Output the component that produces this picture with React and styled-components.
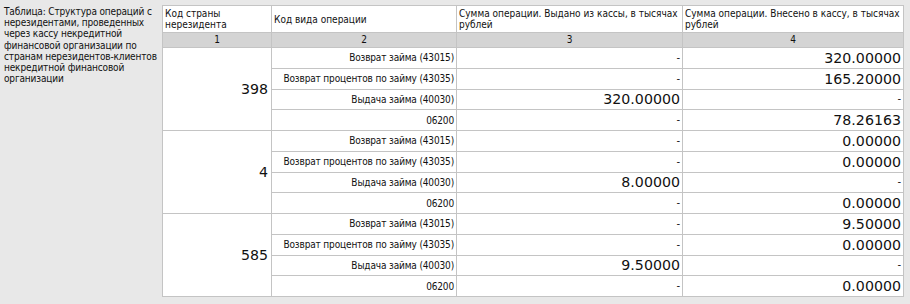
import { createGlobalStyle, styled } from "styled-components";

const GlobalStyle = createGlobalStyle`
  html, body {
    margin: 0;
    background: #e8e8e8;
  }
`;

const captionLines = [
  "Таблица: Структура операций с",
  "нерезидентами, проведенных",
  "через кассу некредитной",
  "финансовой организации по",
  "странам нерезидентов-клиентов",
  "некредитной финансовой",
  "организации",
];

const groups = [
  {
    country: "398",
    rows: [
      ["Возврат займа (43015)", "-", "320.00000"],
      ["Возврат процентов по займу (43035)", "-", "165.20000"],
      ["Выдача займа (40030)", "320.00000", "-"],
      ["06200", "-", "78.26163"],
    ],
  },
  {
    country: "4",
    rows: [
      ["Возврат займа (43015)", "-", "0.00000"],
      ["Возврат процентов по займу (43035)", "-", "0.00000"],
      ["Выдача займа (40030)", "8.00000", "-"],
      ["06200", "-", "0.00000"],
    ],
  },
  {
    country: "585",
    rows: [
      ["Возврат займа (43015)", "-", "9.50000"],
      ["Возврат процентов по займу (43035)", "-", "0.00000"],
      ["Выдача займа (40030)", "9.50000", "-"],
      ["06200", "-", "0.00000"],
    ],
  },
];

export default function App() {
  return (
    <Page>
      <GlobalStyle />
      <Caption>
        {captionLines.map((l) => (
          <CaptionLine key={l}>{l}</CaptionLine>
        ))}
      </Caption>
      <Grid>
        <colgroup>
          <col style={{ width: 109 }} />
          <col style={{ width: 185 }} />
          <col style={{ width: 226 }} />
          <col />
        </colgroup>
        <thead>
          <tr>
            <Head>Код страны нерезидента</Head>
            <Head>Код вида операции</Head>
            <Head>Сумма операции. Выдано из кассы, в тысячах рублей</Head>
            <Head>Сумма операции. Внесено в кассу, в тысячах рублей</Head>
          </tr>
          <tr>
            <Index>1</Index>
            <Index>2</Index>
            <Index>3</Index>
            <Index>4</Index>
          </tr>
        </thead>
        <tbody>
          {groups.map((g) =>
            g.rows.map((r, i) => (
              <Row key={g.country + i}>
                {i === 0 && <Country rowSpan={4}>{g.country}</Country>}
                <Label>{r[0]}</Label>
                <Amount $dash={r[1] === "-"}>{r[1]}</Amount>
                <Amount $dash={r[2] === "-"}>{r[2]}</Amount>
              </Row>
            ))
          )}
        </tbody>
      </Grid>
    </Page>
  );
}

const Page = styled.div`
  display: flex;
  align-items: flex-start;
  width: 910px;
  height: 304px;
  font-family: "DejaVu Sans Condensed", "DejaVu Sans", sans-serif;
  color: #111;
  overflow: hidden;
`;

const Caption = styled.div`
  width: 154px;
  padding: 6px 0 0 4px;
  font-size: 10px;
  line-height: 11.2px;
  letter-spacing: -0.15px;
  box-sizing: content-box;
`;

const CaptionLine = styled.div`
  white-space: nowrap;
`;

const Grid = styled.table`
  margin: 5px 0 0 4px;
  width: 742px;
  table-layout: fixed;
  border-collapse: collapse;
  background: #fff;
  border: 1px solid #c4c4c4;
`;

const Head = styled.th`
  height: 26px;
  padding: 0 2px;
  border: 1px solid #c4c4c4;
  font-weight: normal;
  font-size: 10px;
  line-height: 11px;
  text-align: left;
  vertical-align: middle;
`;

const Index = styled.td`
  height: 14px;
  padding: 0;
  border: 1px solid #c4c4c4;
  background: #d4d4d4;
  font-size: 10px;
  text-align: center;
  line-height: 12px;
`;

const Row = styled.tr`
  height: 20.75px;
`;

const Country = styled.td`
  padding: 0 3px 0 0;
  border: 1px solid #c4c4c4;
  font-family: "DejaVu Sans", sans-serif;
  font-size: 14.2px;
  text-align: right;
  vertical-align: middle;
`;

const Label = styled.td`
  padding: 0 2px 0 0;
  border: 1px solid #c4c4c4;
  font-size: 10px;
  letter-spacing: -0.15px;
  text-align: right;
  vertical-align: middle;
  white-space: nowrap;
`;

const Amount = styled.td`
  padding: 0 2px 0 0;
  border: 1px solid #c4c4c4;
  font-family: "DejaVu Sans", sans-serif;
  font-size: ${(p) => (p.$dash ? "10px" : "14.2px")};
  line-height: 18px;
  text-align: right;
  vertical-align: middle;
`;
